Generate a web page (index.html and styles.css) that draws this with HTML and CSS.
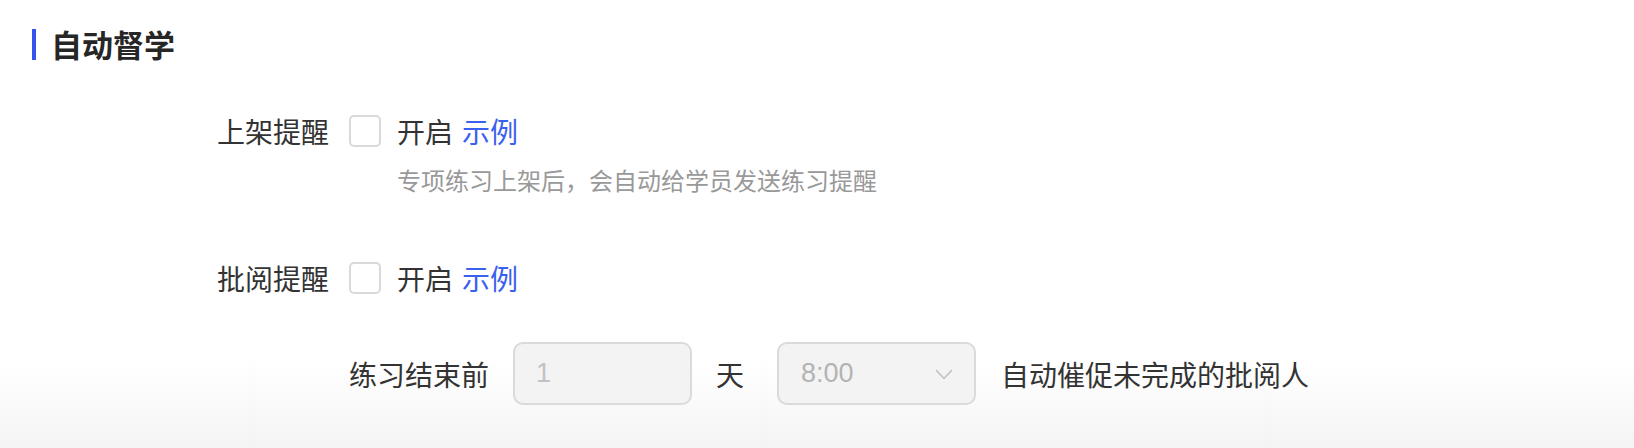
FILE: index.html
```html
<!DOCTYPE html>
<html lang="zh-CN">
<head>
<meta charset="utf-8">
<title>自动督学</title>
<link rel="stylesheet" href="styles.css">
</head>
<body>
<div class="page">
  <h2 class="title"><span class="title-bar"></span>自动督学</h2>
  <div class="form">
    <div class="row row-first">
      <div class="label">上架提醒</div>
      <div class="control">
        <div class="check-line">
          <span class="checkbox"></span>
          <span class="check-text">开启</span>
          <a class="link">示例</a>
        </div>
        <div class="hint">专项练习上架后，会自动给学员发送练习提醒</div>
      </div>
    </div>
    <div class="row row-second">
      <div class="label">批阅提醒</div>
      <div class="control">
        <div class="check-line">
          <span class="checkbox"></span>
          <span class="check-text">开启</span>
          <a class="link">示例</a>
        </div>
      </div>
    </div>
    <div class="row row-third">
      <div class="label"></div>
      <div class="control inline">
        <span class="text">练习结束前</span>
        <div class="input disabled">1</div>
        <span class="text day">天</span>
        <div class="select disabled">
          <span>8:00</span>
          <svg class="chev" width="18" height="11" viewBox="0 0 18 11"><path d="M1 1 L9 9.5 L17 1" fill="none" stroke="#bdbdbd" stroke-width="1.4"/></svg>
        </div>
        <span class="text after">自动催促未完成的批阅人</span>
      </div>
    </div>
  </div>
</div>
</body>
</html>
```

FILE: styles.css
```css
html, body {
  margin: 0;
  padding: 0;
}
body {
  min-height: 448px;
  background: linear-gradient(to bottom, #ffffff 0, #ffffff 360px, #f4f4f4 448px);
  font-family: "Noto Sans CJK SC", "Noto Sans", sans-serif;
  color: #333333;
}
.page {
  padding-top: 28px;
}
.title {
  margin: 0;
  display: flex;
  align-items: center;
  height: 32px;
  padding-left: 32px;
  font-size: 31px;
  line-height: 32px;
  font-weight: 700;
  color: #262626;
}
.title-bar {
  width: 4px;
  height: 31px;
  background: #3355ee;
  margin-right: 15px;
}
.form {
  padding-left: 185px;
}
.row {
  display: flex;
  align-items: flex-start;
}
.row-first {
  margin-top: 55px;
}
.row-second {
  margin-top: 70px;
}
.row-third {
  margin-top: 48px;
}
.label {
  width: 144px;
  text-align: right;
  font-size: 28px;
  line-height: 32px;
  color: #333333;
  flex-shrink: 0;
}
.control {
  margin-left: 20px;
}
.check-line {
  display: flex;
  align-items: center;
  height: 32px;
  font-size: 28px;
  line-height: 32px;
}
.checkbox {
  width: 32px;
  height: 32px;
  box-sizing: border-box;
  border: 2px solid #d9d9d9;
  border-radius: 5px;
  background: #fff;
}
.check-text {
  margin-left: 16px;
  color: #333333;
}
.link {
  margin-left: 9px;
  color: #3a60ee;
  cursor: pointer;
}
.hint {
  margin-top: 21px;
  margin-left: 48px;
  font-size: 24px;
  line-height: 24px;
  color: #999999;
}
.inline {
  display: flex;
  align-items: center;
  height: 63px;
}
.text {
  font-size: 28px;
  line-height: 32px;
  color: #333333;
}
.input, .select {
  box-sizing: border-box;
  height: 63px;
  border: 2px solid #dadada;
  border-radius: 10px;
  background: #f3f3f3;
  font-family: "Liberation Sans", Arial, sans-serif;
  font-size: 27px;
  color: #c2c2c2;
  display: flex;
  align-items: center;
}
.input {
  width: 179px;
  margin-left: 24px;
  padding-left: 21px;
}
.day {
  margin-left: 24px;
}
.select {
  width: 199px;
  margin-left: 33px;
  padding: 0 21px 0 22px;
  justify-content: space-between;
  color: #b3b3b3;
}
.chev {
  display: block;
  margin-top: 1px;
}
.after {
  margin-left: 25px;
}
```
